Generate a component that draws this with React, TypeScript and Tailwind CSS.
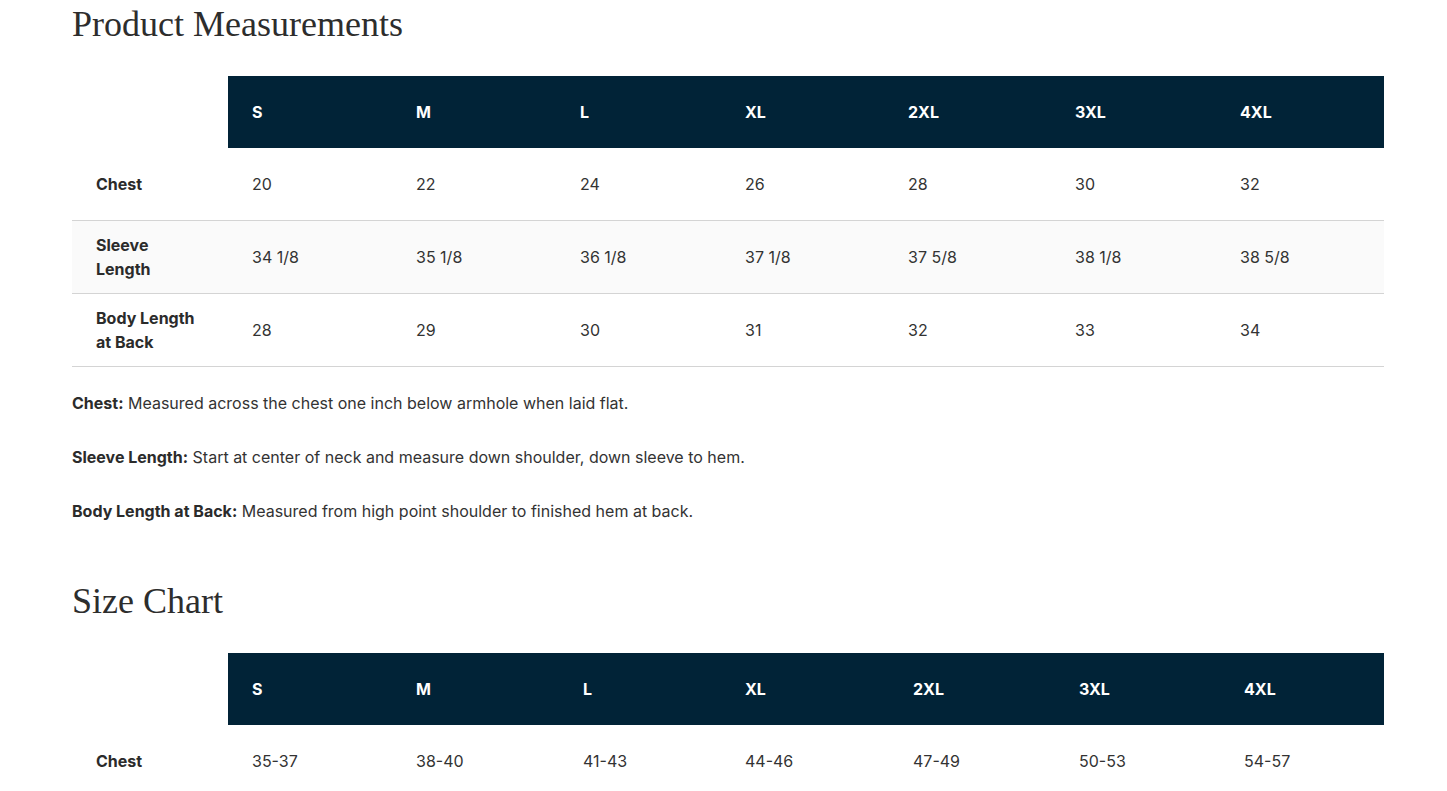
const sizes = ['S', 'M', 'L', 'XL', '2XL', '3XL', '4XL'];

const measurements = [
  { label: 'Chest', values: ['20', '22', '24', '26', '28', '30', '32'] },
  { label: 'Sleeve Length', values: ['34 1/8', '35 1/8', '36 1/8', '37 1/8', '37 5/8', '38 1/8', '38 5/8'] },
  { label: 'Body Length at Back', values: ['28', '29', '30', '31', '32', '33', '34'] },
];

const chart = [{ label: 'Chest', values: ['35-37', '38-40', '41-43', '44-46', '47-49', '50-53', '54-57'] }];

type Row = { label: string; values: string[] };

function SizeTable({ rows, cols, bordered }: { rows: Row[]; cols: number[]; bordered: boolean }) {
  const cell = bordered ? 'border-b border-[#d4d4d4]' : '';
  return (
    <table className="w-full table-fixed border-separate border-spacing-0 text-base leading-6 text-[#333]">
      <colgroup>
        <col className="w-[156px]" />
        {cols.map((w, i) => (
          <col key={i} style={{ width: w }} />
        ))}
      </colgroup>
      <thead>
        <tr className="h-[72px]">
          <th className="bg-white" />
          {sizes.map((s) => (
            <th key={s} className="bg-[#012337] px-6 text-left font-bold text-white">
              {s}
            </th>
          ))}
        </tr>
      </thead>
      <tbody>
        {rows.map((row, i) => (
          <tr
            key={row.label}
            className={`${bordered ? 'h-[73px]' : 'h-[72px]'} ${i % 2 === 1 ? 'bg-[#fafafa]' : 'bg-white'}`}
          >
            <th className={`px-6 text-left font-bold text-[#2b2b2b] ${cell}`}>{row.label}</th>
            {row.values.map((v, j) => (
              <td key={j} className={`px-6 ${cell}`}>
                {v}
              </td>
            ))}
          </tr>
        ))}
      </tbody>
    </table>
  );
}

export default function App() {
  return (
    <div className="min-h-screen bg-white px-[72px] pt-[4px] font-['Inter','Noto_Sans',sans-serif] text-[#333]">
      {/* Product Measurements */}
      <h2 className="font-['Liberation_Serif',serif] text-[36px] leading-[41px] text-[#2d2d2d]">
        Product Measurements
      </h2>
      <div className="mt-[31px]">
        <SizeTable rows={measurements} cols={[164, 164, 165, 163, 167, 165, 168]} bordered />
      </div>

      {/* Notes */}
      <div className="mt-[24px] flex flex-col gap-[30px] text-base leading-6 text-[#333]">
        <p>
          <span className="font-bold text-[#2b2b2b]">Chest:</span> Measured across the chest one inch below armhole when laid flat.
        </p>
        <p>
          <span className="font-bold text-[#2b2b2b]">Sleeve Length:</span> Start at center of neck and measure down shoulder, down sleeve to hem.
        </p>
        <p>
          <span className="font-bold text-[#2b2b2b]">Body Length at Back:</span> Measured from high point shoulder to finished hem at back.
        </p>
      </div>

      {/* Size Chart */}
      <h2 className="mt-[58px] font-['Liberation_Serif',serif] text-[36px] leading-[41px] text-[#2d2d2d]">
        Size Chart
      </h2>
      <div className="mt-[31px]">
        <SizeTable rows={chart} cols={[164, 167, 162, 168, 166, 165, 164]} bordered={false} />
      </div>
    </div>
  );
}
